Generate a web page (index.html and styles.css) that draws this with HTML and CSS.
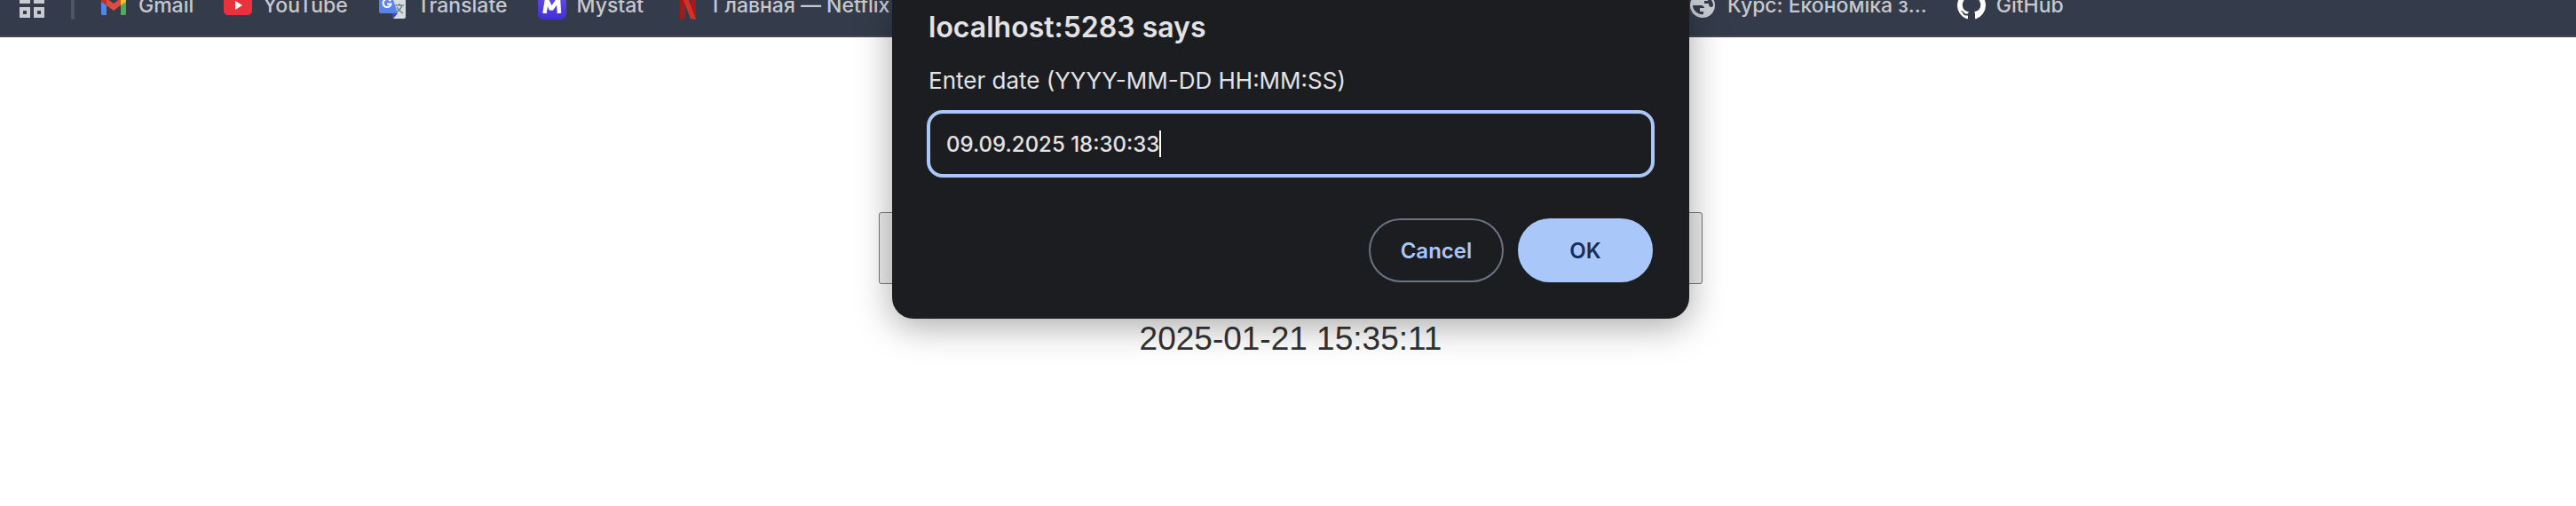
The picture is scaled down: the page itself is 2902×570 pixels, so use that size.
FILE: index.html
```
<!DOCTYPE html>
<html lang="en">
<head>
<meta charset="utf-8">
<title>localhost:5283</title>
<link rel="stylesheet" href="styles.css">
</head>
<body>
<nav class="bookmarks" aria-label="Bookmarks">
  <div class="group">
    <button class="apps" type="button" aria-label="Apps">
      <svg width="28" height="28" viewBox="0 0 28 28" fill="none" stroke="#c7cbd2" stroke-width="4"><path d="M2 2h8v8H2zM18 2h8v8h-8zM2 18h8v8H2zM18 18h8v8h-8z"/></svg>
    </button>
    <span class="separator"></span>
    <a class="bookmark" href="#">
      <svg width="32" height="32" viewBox="0 0 32 32"><path fill="#4f86ee" d="M2 10l6 4v13H4a2 2 0 0 1-2-2z"/><path fill="#58a85a" d="M24 14l6-4v15a2 2 0 0 1-2 2h-4z"/><path fill="#f2bc2f" d="M24 8l2-2c2-1 4 0 4 3v3l-6 4z"/><path fill="#b8342b" d="M2 9c0-3 2-4 4-3l2 2v8l-6-4z"/><path fill="#dc4b3e" d="M8 8l8 6 8-6v8l-8 6-8-6z"/></svg>
      <span>Gmail</span>
    </a>
    <a class="bookmark" href="#">
      <svg width="32" height="32" viewBox="0 0 32 32"><rect y="5" width="32" height="22" rx="5" fill="#ea323c"/><path fill="#fff" d="M13 11l8 5-8 5z"/></svg>
      <span>YouTube</span>
    </a>
    <a class="bookmark" href="#">
      <svg width="32" height="32" viewBox="0 0 32 32"><path fill="#d9dcde" d="M12 7h17a2 2 0 0 1 2 2v20a2 2 0 0 1-2 2H17z"/><path fill="#3a49ab" d="M15 25h7l-5 6z"/><path fill="#5985ea" d="M3 1h11l8 24H3a2 2 0 0 1-2-2V3a2 2 0 0 1 2-2z"/><path d="M14 11.300a4.500 4.500 0 1 0 .5 3.200H10" fill="none" stroke="#fff" stroke-width="2"/><path d="M19 16h10M24 14v2M27 16c-1 4-4 6-7 8M21 18c1 3 4 5 7 7" fill="none" stroke="#6d8791" stroke-width="1.500"/></svg>
      <span>Translate</span>
    </a>
    <a class="bookmark" href="#">
      <svg width="32" height="32" viewBox="0 0 32 32"><defs><linearGradient id="violet" x2="0" y2="1"><stop stop-color="#6a50ee"/><stop offset="1" stop-color="#432fd4"/></linearGradient></defs><rect width="32" height="32" rx="6" fill="url(#violet)"/><path d="M7.500 25L10 9.500l5 11 8-11L24 25" fill="none" stroke="#fff" stroke-width="4.500" stroke-linejoin="bevel"/></svg>
      <span>Mystat</span>
    </a>
    <a class="bookmark" href="#">
      <svg width="32" height="32" viewBox="0 0 32 32"><path fill="#a01c1c" d="M7 0h6v31l-6 1zM19 0h6v32l-6-1z"/><path fill="#d93025" d="M7 0h6l12 32-6-1z"/></svg>
      <span>Главная — Netflix</span>
    </a>
  </div>
  <div class="group">
    <a class="bookmark" href="#">
      <svg width="32" height="32" viewBox="0 0 32 32"><circle cx="16" cy="16" r="14" fill="#c7cbd2"/><path fill="#343c4b" d="M5 16h9c3 0 4 2 4 3h-5v4h4v3c-6 1-12-4-12-10zM17 5h6v3c0 3-1 3-5 3v3h5c0 3 1 4 4 4l1-2c0-5-4-10-11-11z"/></svg>
      <span>Курс: Економіка з...</span>
    </a>
    <a class="bookmark" href="#">
      <svg width="32" height="32" viewBox="0 0 16 16"><path fill="#fff" d="M8 0C3.580 0 0 3.580 0 8c0 3.540 2.290 6.530 5.470 7.590.4.070.55-.17.55-.38 0-.19-.01-.82-.01-1.490-2.010.37-2.530-.49-2.690-.94-.09-.23-.48-.94-.82-1.130-.28-.15-.68-.52-.01-.53.63-.01 1.080.58 1.230.82.72 1.210 1.870.87 2.330.66.07-.52.28-.87.51-1.070-1.780-.2-3.640-.89-3.640-3.950 0-.87.31-1.590.82-2.150-.08-.2-.36-1.020.08-2.120 0 0 .67-.21 2.200.82a7.600 7.600 0 0 1 4 0c1.530-1.040 2.200-.82 2.200-.82.44 1.100.16 1.920.08 2.120.51.56.82 1.270.82 2.150 0 3.070-1.870 3.750-3.650 3.950.29.25.54.73.54 1.480 0 1.070-.01 1.930-.01 2.200 0 .21.15.46.55.38A8 8 0 0 0 16 8c0-4.420-3.580-8-8-8z"/></svg>
      <span>GitHub</span>
    </a>
  </div>
</nav>

<main class="page">
  <button class="page-button" type="button" aria-label="Set date"></button>
  <time class="stamp" datetime="2025-01-21T15:35:11">2025-01-21 15:35:11</time>
</main>

<div class="overlay">
  <form class="dialog" role="dialog" aria-labelledby="dialog-title">
    <h1 class="title" id="dialog-title">localhost:5283 says</h1>
    <label class="message" for="date">Enter date (YYYY-MM-DD HH:MM:SS)</label>
    <div class="field">
      <input class="input" id="date" type="text" value="09.09.2025 18:30:33">
      <span class="caret"></span>
    </div>
    <div class="actions">
      <button class="action cancel" type="button">Cancel</button>
      <button class="action ok" type="button">OK</button>
    </div>
  </form>
</div>
</body>
</html>
```
FILE: styles.css
```
* {
  box-sizing: border-box;
}

body {
  margin: 0;
  background: #fff;
  font-family: Inter, Roboto, sans-serif;
}

button,
input {
  font-family: inherit;
}

.bookmarks {
  display: grid;
  grid-template-columns: calc(50% + 440px) 1fr;
  grid-template-rows: 22px;
  align-items: end;
  height: 42px;
  padding: 0 0 18px 22px;
  overflow: hidden;
  background: #343c4b;
  border-bottom: 2px solid #45474a;
}

.group {
  display: flex;
  align-items: center;
  gap: 34px;
}

.apps {
  display: flex;
  padding: 0;
  border: 0;
  background: none;
}

.separator {
  width: 4px;
  height: 32px;
  margin: 0 -6px 0 -4px;
  border-radius: 2px;
  background: #4d5665;
}

.bookmark {
  display: flex;
  align-items: center;
  gap: 12px;
  color: #c7c8cf;
  font-size: 23px;
  font-weight: 500;
  line-height: 32px;
  white-space: nowrap;
  text-decoration: none;
}

.page {
  display: flex;
  flex-direction: column;
  align-items: center;
  gap: 41px;
  padding: 197px 0 0 6px;
}

.page-button {
  width: 928px;
  height: 81px;
  border: 1px solid #767676;
  border-radius: 3px;
  background: #efefef;
}

.stamp {
  color: #333;
  font-family: "Liberation Sans", Arial, sans-serif;
  font-size: 37px;
  line-height: 42px;
}

.overlay {
  position: absolute;
  top: 0;
  left: 0;
  right: 0;
  display: flex;
  justify-content: center;
  padding-left: 6px;
}

.dialog {
  width: 898px;
  padding: 11px 41px 41px;
  border-radius: 0 0 24px 24px;
  background: #1c1d20;
  box-shadow: 0 8px 40px rgba(0, 0, 0, 0.35);
  color: #e3e3e6;
}

.title {
  margin: 0;
  font-size: 32px;
  font-weight: 600;
  line-height: 40px;
}

.message {
  display: block;
  margin: 24px 0 19px;
  font-size: 26px;
  line-height: 32px;
}

.field {
  display: flex;
  align-items: center;
  height: 72px;
  padding-left: 20px;
  border-radius: 16px;
  outline: 4px solid #aac7fa;
  outline-offset: -2px;
}

.input {
  field-sizing: content;
  padding: 0;
  border: 0;
  outline: 0;
  background: none;
  color: #e3e3e6;
  font-size: 24px;
  font-weight: 500;
}

.caret {
  width: 2px;
  height: 30px;
  background: #fff;
}

.actions {
  display: flex;
  justify-content: flex-end;
  gap: 16px;
  margin-top: 48px;
}

.action {
  width: 152px;
  height: 72px;
  border: 2px solid #6b7485;
  border-radius: 36px;
  background: none;
  color: #aac7fa;
  font-size: 24px;
  font-weight: 600;
}

.ok {
  border-color: #aac7fa;
  background: #aac7fa;
  color: #12305f;
}
```
